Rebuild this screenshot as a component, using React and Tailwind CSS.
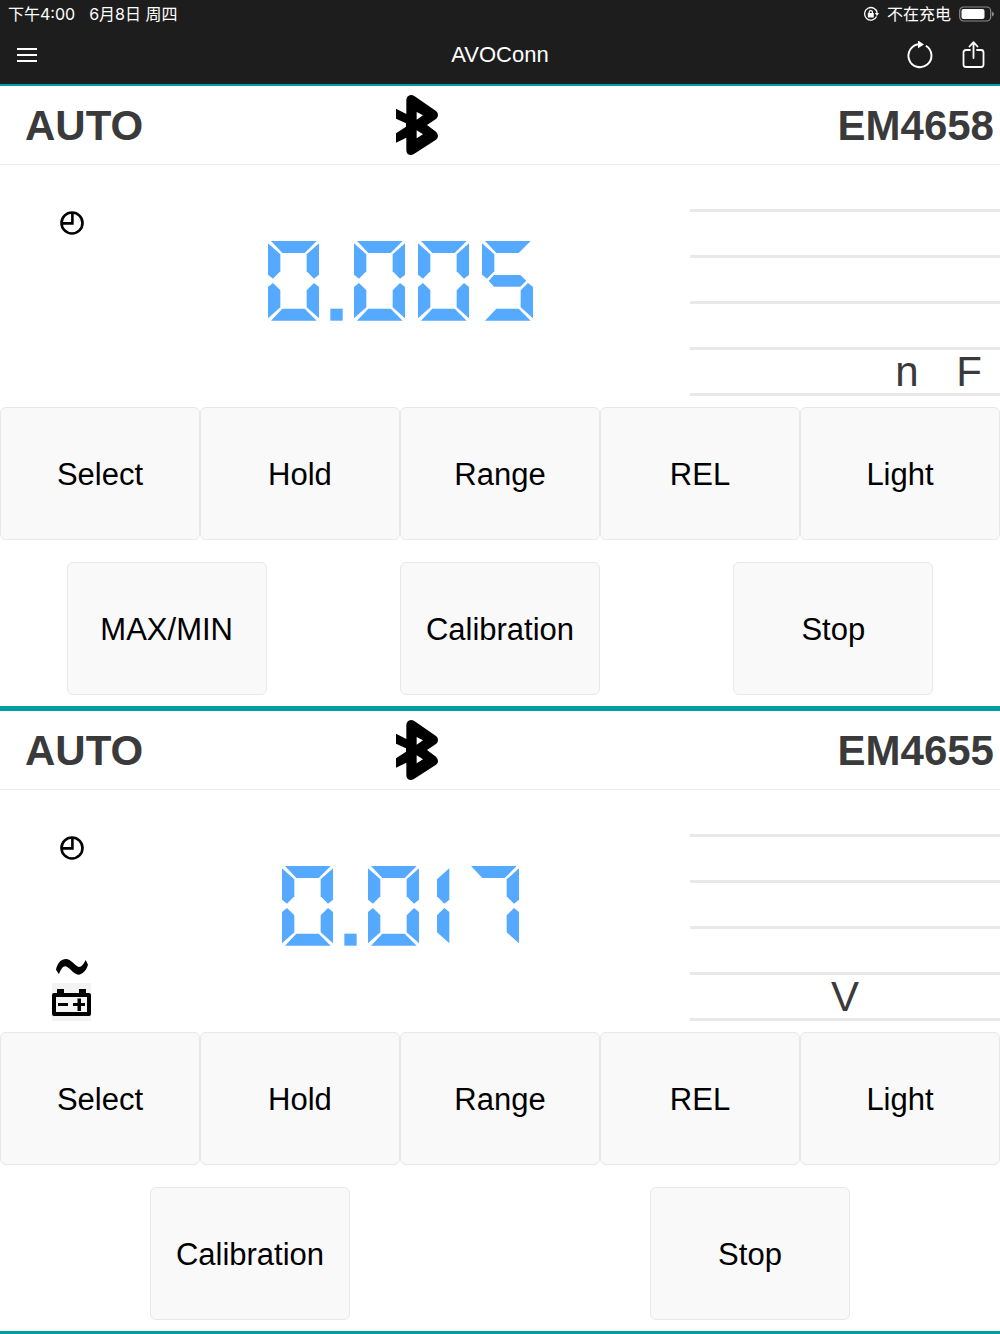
const meters = [
    {
        model: 'EM4658',
        reading: '0.005',
        units: ['', '', '', 'n', 'F'],
        ac: false,
        lowBattery: false,
        actions: ['MAX/MIN', 'Calibration', 'Stop']
    },
    {
        model: 'EM4655',
        reading: '0.017',
        units: ['', '', 'V', '', ''],
        ac: true,
        lowBattery: true,
        actions: ['Calibration', 'Stop']
    }
];

const mainKeys = ['Select', 'Hold', 'Range', 'REL', 'Light'];

// Seven segment display, drawn on a 153 x 239 digit
const segments = {
    a: '9,0 146,0 110,36 43,36',
    b: '153,7 116,40 116,91 138,113 153,101',
    c: '153,232 116,199 116,148 138,126 153,138',
    d: '9,239 146,239 110,203 43,203',
    e: '0,232 37,199 37,148 15,126 0,138',
    f: '0,7 37,40 37,91 15,113 0,101',
    g: '20,119 36,102 115,102 133,119 115,137 36,137',
    dot: '-5,203 32,203 32,239 -5,239'
};

const glyphs = {
    '0': ['a', 'b', 'c', 'd', 'e', 'f'],
    '1': ['b', 'c'],
    '5': ['a', 'c', 'd', 'f', 'g'],
    '7': ['a', 'b', 'c'],
    '.': ['dot']
};

const glyphBoxes = {
    '1': { viewBox: '80 0 108 240', size: 'w-9' },
    '.': { viewBox: '-21 0 66 240', size: 'w-[22px]' }
};

const digitBox = { viewBox: '-21 0 192 240', size: 'w-16' };

const Reading = ({ value }) => (
    <div role="img" aria-label={value} className="flex text-[#55a9ff]">
        {value.split('').map((char, index) => {
            const box = glyphBoxes[char] || digitBox;
            return (
                <svg key={index} viewBox={box.viewBox} className={`h-20 ${box.size}`} fill="currentColor">
                    {glyphs[char].map((name) => (
                        <polygon key={name} points={segments[name]} />
                    ))}
                </svg>
            );
        })}
    </div>
);

const BluetoothIcon = () => (
    <svg viewBox="0 0 126 180" className="h-[60px] w-[42px]" role="img" aria-label="Bluetooth">
        <path
            fillRule="evenodd"
            d="M0 41L31 57V15Q32 1 45 0Q50 0 56 4L120 48Q126 53 126 60Q126 66 121 71L93 90L120 110Q126 117 126 123Q126 130 120 134L55 176Q49 180 43 180Q31 178 31 165V128L0 143V115L30 95V85L0 71ZM62 51V74L81 61ZM62 106V130L81 118Z"
        />
    </svg>
);

const ClockIcon = () => (
    <svg viewBox="0 0 24 24" className="size-6" fill="none" stroke="black" strokeWidth="2.6" role="img" aria-label="Timer">
        <circle cx="12" cy="12" r="10.5" />
        <path d="M12.4 2V12.4H2" />
    </svg>
);

const AcIcon = () => (
    <svg viewBox="0 0 96 48" className="h-4 w-8" role="img" aria-label="AC">
        <path d="M0 32C4 12 16 0 30 0C44 0 58 20 68 24C76 25 84 14 89 3L96 17C92 32 80 46 67 47C52 46 40 24 28 22C20 22 14 32 9 46Z" />
    </svg>
);

const LowBatteryIcon = () => (
    <svg viewBox="0 0 39 38" className="h-[38px] w-[39px]" role="img" aria-label="Low battery">
        <rect width="39" height="38" fill="#f3f3f3" />
        <path d="M5 6H12V10H27V6H34V10H37Q39 10 39 12V31Q39 33 37 33H2Q0 33 0 31V12Q0 10 2 10H5Z" />
        <rect x="4" y="14" width="31" height="15" fill="#f6f6f6" />
        <path d="M6 20H16V23H6ZM21 20H25.5V15.5H29V20H33V23H29V28H25.5V23H21Z" />
    </svg>
);

const StatusBar = () => (
    <div className="flex h-[27px] items-center justify-between pr-1.5 pl-2 text-[16px]">
        <div className="flex gap-3.5">
            <span>下午4:00</span>
            <span>6月8日 周四</span>
        </div>
        <div className="flex items-center gap-2">
            <svg viewBox="0 0 16 16" className="size-4" fill="none" stroke="white" strokeWidth="1.3">
                <path d="M13.6 10.5A6.3 6.3 0 1 1 14.1 6.8" />
                <path d="M11.8 7H16L13.9 10Z" fill="white" stroke="none" />
                <rect x="4.8" y="7" width="6" height="4.4" rx="0.6" fill="white" stroke="none" />
                <path d="M6.2 7.4V6.2A1.6 1.6 0 0 1 9.4 6.2V7.4" />
            </svg>
            <span>不在充电</span>
            <svg viewBox="0 0 35 16" className="h-4 w-[35px]">
                <rect x="0.7" y="1" width="31" height="14" rx="4" fill="none" stroke="#8b8b8b" strokeWidth="1.2" />
                <rect x="2.5" y="3" width="23" height="10" rx="2" fill="white" />
                <path d="M33 5.5Q35 6.5 35 8Q35 9.5 33 10.5Z" fill="#8b8b8b" />
            </svg>
        </div>
    </div>
);

const NavBar = () => (
    <nav className="grid h-[57px] grid-cols-3 items-center px-3.5 pb-0.5">
        <button aria-label="Menu" className="flex w-[26px] flex-col gap-1 px-[3px]">
            <span className="h-0.5 w-full bg-white" />
            <span className="h-0.5 w-full bg-white" />
            <span className="h-0.5 w-full bg-white" />
        </button>
        <h1 className="text-center font-['Liberation_Sans',sans-serif] text-[22px]">AVOConn</h1>
        <div className="flex items-center justify-end gap-7">
            <button aria-label="Refresh">
                <svg viewBox="0 0 28 28" className="size-7" fill="none" stroke="white" strokeWidth="1.9">
                    <path d="M19.8 4.8A11.5 11.5 0 1 1 14 3.2" />
                    <path d="M12 -0.5L18 3.5L12 7.2Z" fill="white" stroke="none" />
                </svg>
            </button>
            <button aria-label="Share">
                <svg viewBox="0 0 24 28" className="h-7 w-6" fill="none" stroke="white" strokeWidth="1.8" strokeLinecap="round" strokeLinejoin="round">
                    <path d="M8 9H4Q1.5 9 1.5 11.5V23.5Q1.5 26 4 26H19Q21.5 26 21.5 23.5V11.5Q21.5 9 19 9H15" />
                    <path d="M11.5 17V1.5M7.5 5.5L11.5 1.2L15.5 5.5" />
                </svg>
            </button>
        </div>
    </nav>
);

const KeyButton = ({ label }) => (
    <button className="h-[133px] w-1/5 rounded-md border border-[#e8e8e8] bg-[#f9f9f9] pt-[3px] text-[31px] text-black">
        {label}
    </button>
);

const Meter = ({ meter }) => (
    <section className="border-b-[5px] border-[#009e9e] last:border-b-[3px]">
        <header className="flex h-[79px] items-center border-b border-[#ebebeb] text-[42px] leading-none font-bold">
            <span className="w-1/3 pt-0.5 pl-[25px]">AUTO</span>
            <span className="flex w-1/6 justify-center">
                <BluetoothIcon />
            </span>
            <h2 className="w-1/2 pt-0.5 pr-1.5 text-right">{meter.model}</h2>
        </header>

        <div className="flex">
            <div className="flex w-[14.3%] flex-col items-center justify-between pt-[46px]">
                <ClockIcon />
                <div className="flex flex-col items-center gap-2">
                    {meter.ac && <AcIcon />}
                    {meter.lowBattery && <LowBatteryIcon />}
                </div>
            </div>

            <div className="flex w-[51.4%] items-center justify-center">
                <Reading value={meter.reading} />
            </div>

            <div className="ml-auto w-[31%] pt-px">
                {[0, 1, 2, 3].map((row) => (
                    <div key={row} className="h-[46px] border-b-[3px] border-[#e9e9e9]"></div>
                ))}
                <div className="grid h-[46px] grid-cols-5 border-b-[3px] border-[#e9e9e9] text-center text-[42px] leading-[43px]">
                    {meter.units.map((unit, index) => (
                        <span key={index}>{unit}</span>
                    ))}
                </div>
            </div>
        </div>

        <div className="mt-[11px] flex">
            {mainKeys.map((key) => (
                <KeyButton key={key} label={key} />
            ))}
        </div>
        <div className="mt-[22px] mb-[11px] flex justify-around">
            {meter.actions.map((action) => (
                <KeyButton key={action} label={action} />
            ))}
        </div>
    </section>
);

const App = () => {
    return (
        <div className="min-h-screen bg-white font-['Liberation_Sans',sans-serif] text-[#3a3a3a]">
            <div className="border-b-2 border-[#009e9e] bg-[#1d1d1d] font-['Inter','Noto_Sans_CJK_SC',sans-serif] text-white">
                <StatusBar />
                <NavBar />
            </div>
            <main>
                {meters.map((meter) => (
                    <Meter key={meter.model} meter={meter} />
                ))}
            </main>
        </div>
    );
};

export default App;
